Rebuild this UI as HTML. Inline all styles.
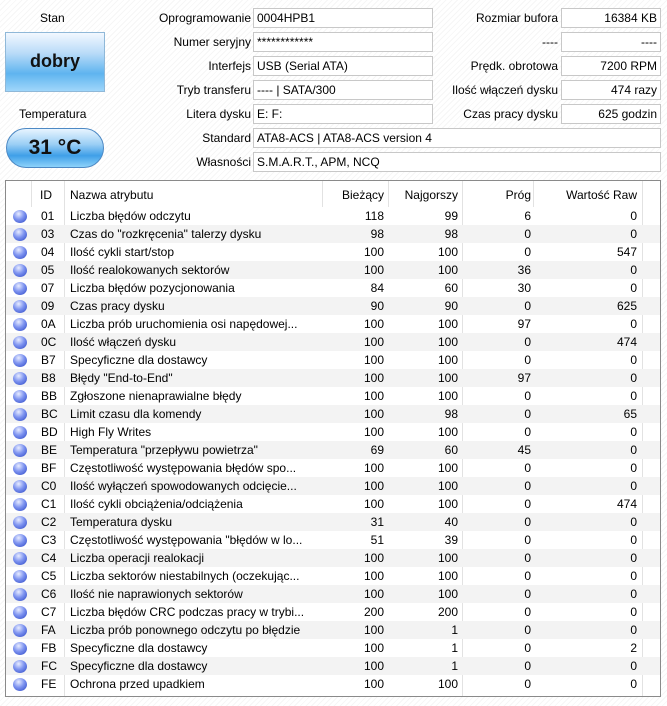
<!DOCTYPE html>
<html><head><meta charset="utf-8"><style>
*{margin:0;padding:0;box-sizing:border-box}
body{width:667px;height:706px;background:#fff;font-family:"Liberation Sans","DejaVu Sans",sans-serif;font-size:12px;color:#000;position:relative;overflow:hidden;
background-image:repeating-linear-gradient(135deg,#fff 0,#fff 3px,#f6f6f6 3px,#f6f6f6 4px)}
.a{position:absolute;white-space:nowrap}
.l{text-align:right}
.f{position:absolute;height:20px;border:1px solid #c8c8c8;background:#fff;padding:1px 3px;line-height:17px;white-space:nowrap}
.stan{left:5px;top:32px;width:100px;height:60px;border:1px solid #8fb8d8;background:linear-gradient(#f2f8ff 0%,#b9dbf8 35%,#5fb4ef 70%,#9fd6fa 100%);font-weight:bold;font-size:18px;text-align:center;line-height:56px;color:#111}
.temp{left:6px;top:128px;width:98px;height:40px;border:1px solid #4d89c4;border-radius:20px;background:linear-gradient(#e8f4ff 0%,#9ccff5 40%,#3f9fe8 70%,#8dd2fa 100%);font-weight:bold;font-size:21px;text-align:center;line-height:38px;color:#111}
.tbl{left:5px;top:180px;width:656px;height:517px;border:1px solid #8a8a8a;background:#fff}
.r{position:absolute;left:0;width:654px;height:18px;line-height:18px}
.r.g{background:#f3f3f3}
.r span{position:absolute;white-space:nowrap}
.dot{position:absolute;left:7px;top:3px;width:14px;height:13px;border-radius:50%;background:radial-gradient(circle at 40% 30%,#e8ecff 0%,#7d93f0 45%,#2a45c4 100%)}
.vl{position:absolute;top:0;width:1px;background:#e2e2e2}
</style></head><body>
<div class="a" style="left:40px;top:11px">Stan</div>
<div class="a stan">dobry</div>
<div class="a" style="left:19px;top:107px">Temperatura</div>
<div class="a temp">31 °C</div>

<div class="a l" style="right:416px;top:11px">Oprogramowanie</div>
<div class="f" style="left:253px;top:8px;width:180px">0004HPB1</div>
<div class="a l" style="right:416px;top:35px">Numer seryjny</div>
<div class="f" style="left:253px;top:32px;width:180px">************</div>
<div class="a l" style="right:416px;top:59px">Interfejs</div>
<div class="f" style="left:253px;top:56px;width:180px">USB (Serial ATA)</div>
<div class="a l" style="right:416px;top:83px">Tryb transferu</div>
<div class="f" style="left:253px;top:80px;width:180px">---- | SATA/300</div>
<div class="a l" style="right:416px;top:107px">Litera dysku</div>
<div class="f" style="left:253px;top:104px;width:180px">E: F:</div>
<div class="a l" style="right:416px;top:131px">Standard</div>
<div class="f" style="left:253px;top:128px;width:408px">ATA8-ACS | ATA8-ACS version 4</div>
<div class="a l" style="right:416px;top:155px">Własności</div>
<div class="f" style="left:253px;top:152px;width:408px">S.M.A.R.T., APM, NCQ</div>

<div class="a l" style="right:109px;top:11px">Rozmiar bufora</div>
<div class="f l" style="left:561px;top:8px;width:100px">16384 KB</div>
<div class="a l" style="right:109px;top:35px">----</div>
<div class="f l" style="left:561px;top:32px;width:100px">----</div>
<div class="a l" style="right:109px;top:59px">Prędk. obrotowa</div>
<div class="f l" style="left:561px;top:56px;width:100px">7200 RPM</div>
<div class="a l" style="right:109px;top:83px">Ilość włączeń dysku</div>
<div class="f l" style="left:561px;top:80px;width:100px">474 razy</div>
<div class="a l" style="right:109px;top:107px">Czas pracy dysku</div>
<div class="f l" style="left:561px;top:104px;width:100px">625 godzin</div>

<div class="a tbl" id="t">
<div class="vl" style="left:25px;height:26px"></div>
<div class="vl" style="left:58px;height:515px"></div>
<div class="vl" style="left:316px;height:26px"></div>
<div class="vl" style="left:382px;height:26px"></div>
<div class="vl" style="left:456px;height:515px"></div>
<div class="vl" style="left:527px;height:26px"></div>
<div class="vl" style="left:636px;height:515px"></div>
<div class="r" style="top:5px"><span style="left:34px">ID</span><span style="left:64px">Nazwa atrybutu</span><span style="right:276px">Bieżący</span><span style="right:202px">Najgorszy</span><span style="right:129px">Próg</span><span style="right:23px">Wartość Raw</span></div>
</div>
<script>
var d=[["01","Liczba błędów odczytu",118,99,6,0],["03",'Czas do "rozkręcenia" talerzy dysku',98,98,0,0],["04","Ilość cykli start/stop",100,100,0,547],["05","Ilość realokowanych sektorów",100,100,36,0],["07","Liczba błędów pozycjonowania",84,60,30,0],["09","Czas pracy dysku",90,90,0,625],["0A","Liczba prób uruchomienia osi napędowej...",100,100,97,0],["0C","Ilość włączeń dysku",100,100,0,474],["B7","Specyficzne dla dostawcy",100,100,0,0],["B8",'Błędy "End-to-End"',100,100,97,0],["BB","Zgłoszone nienaprawialne błędy",100,100,0,0],["BC","Limit czasu dla komendy",100,98,0,65],["BD","High Fly Writes",100,100,0,0],["BE",'Temperatura "przepływu powietrza"',69,60,45,0],["BF","Częstotliwość występowania błędów spo...",100,100,0,0],["C0","Ilość wyłączeń spowodowanych odcięcie...",100,100,0,0],["C1","Ilość cykli obciążenia/odciążenia",100,100,0,474],["C2","Temperatura dysku",31,40,0,0],["C3",'Częstotliwość występowania "błędów w lo...',51,39,0,0],["C4","Liczba operacji realokacji",100,100,0,0],["C5","Liczba sektorów niestabilnych (oczekując...",100,100,0,0],["C6","Ilość nie naprawionych sektorów",100,100,0,0],["C7","Liczba błędów CRC podczas pracy w trybi...",200,200,0,0],["FA","Liczba prób ponownego odczytu po błędzie",100,1,0,0],["FB","Specyficzne dla dostawcy",100,1,0,2],["FC","Specyficzne dla dostawcy",100,1,0,0],["FE","Ochrona przed upadkiem",100,100,0,0]];
var h="";d.forEach(function(r,i){h+='<div class="r'+(i%2?' g':'')+'" style="top:'+(26+i*18)+'px"><div class="dot"></div><span style="left:35px">'+r[0]+'</span><span style="left:64px">'+r[1].replace(/"/g,'&quot;')+'</span><span style="right:276px">'+r[2]+'</span><span style="right:202px">'+r[3]+'</span><span style="right:129px">'+r[4]+'</span><span style="right:23px">'+r[5]+'</span></div>'});
document.getElementById("t").insertAdjacentHTML("beforeend",h);
</script>
</body></html>
